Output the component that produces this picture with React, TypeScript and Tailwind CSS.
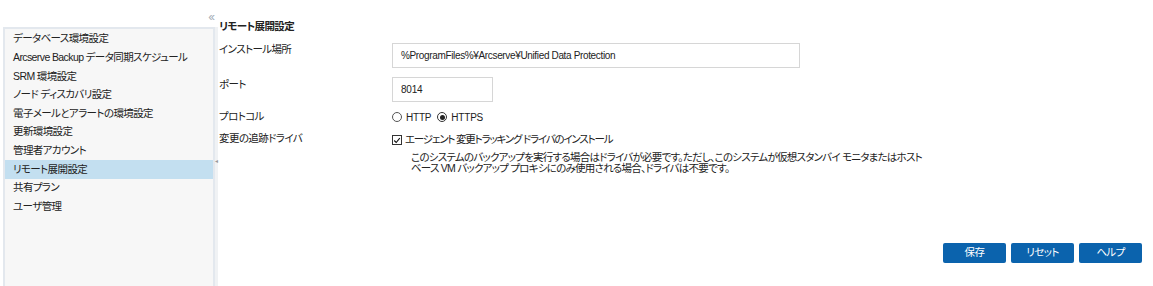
import React from 'react'

const font = { fontFamily: '"Liberation Sans", "Noto Sans CJK JP", sans-serif' }

const menu = [
  'データベース環境設定',
  'Arcserve Backup データ同期スケジュール',
  'SRM 環境設定',
  'ノード ディスカバリ設定',
  '電子メールとアラートの環境設定',
  '更新環境設定',
  '管理者アカウント',
  'リモート展開設定',
  '共有プラン',
  'ユーザ管理',
]

export default function App() {
  return (
    <div
      className="flex h-[286px] w-[1153px] overflow-hidden bg-white text-[10.5px] tracking-[-0.6px] text-[#222] [font-feature-settings:'palt']"
      style={font}
    >
      {/* left navigation */}
      <div className="flex w-[218px] shrink-0 flex-col pl-[3px]">
        <div className="flex h-[27px] items-center justify-end pr-[5px] pt-[6px]">
          <span className="text-[13px] leading-none tracking-[-2px] text-[#a7afb8]">‹‹</span>
        </div>
        <div className="flex flex-1">
          <div className="flex-1 border-l-2 border-t-2 border-r-2 border-[#e3e8ee] bg-[#f7f7f7] pt-[1px]">
            {menu.map((item) => (
              <div
                key={item}
                className={
                  'flex h-[18.6px] items-center whitespace-nowrap pl-[8px] ' +
                  (item === 'リモート展開設定' ? 'bg-[#c3dff0]' : '')
                }
              >
                {item}
              </div>
            ))}
          </div>
          <div className="flex w-[3px] flex-col items-center bg-[#f0f2f4] pt-[131px]">
            <span className="text-[6px] leading-none text-[#999]">◂</span>
          </div>
        </div>
      </div>

      {/* main content */}
      <div className="flex flex-1 flex-col pl-[1px]">
        <div className="mt-[19px] h-[14px] font-bold leading-[14px]">リモート展開設定</div>

        <div className="mt-[10px] flex">
          <div className="w-[173px] leading-[12px]">インストール場所</div>
          <div className="flex h-[25px] w-[408px] items-center border border-[#d6d6d6] px-[8px] text-[10px] tracking-[-0.35px]">
            %ProgramFiles%¥Arcserve¥Unified Data Protection
          </div>
        </div>

        <div className="mt-[9px] flex">
          <div className="w-[173px] pt-[1px] leading-[12px]">ポート</div>
          <div className="flex h-[25px] w-[101px] items-center border border-[#d6d6d6] px-[8px] text-[10px] tracking-[-0.2px]">
            8014
          </div>
        </div>

        <div className="mt-[8px] flex h-[14px] items-center">
          <div className="w-[173px]">プロトコル</div>
          <div className="flex items-center text-[10px] tracking-[-0.2px]">
            <span className="mr-[4px] inline-block h-[10px] w-[10px] rounded-full border border-[#555] bg-white" />
            <span className="mr-[6px]">HTTP</span>
            <span className="mr-[4px] flex h-[10px] w-[10px] items-center justify-center rounded-full border border-[#333] bg-white">
              <span className="h-[5px] w-[5px] rounded-full bg-[#222]" />
            </span>
            <span>HTTPS</span>
          </div>
        </div>

        <div className="mt-[7px] flex">
          <div className="w-[173px] leading-[14px]">変更の追跡ドライバ</div>
          <div className="flex flex-col pt-[2px]">
            <div className="flex h-[14px] items-center">
              <span className="mr-[3px] flex h-[10px] w-[10px] items-center justify-center border border-[#333] bg-white">
                <svg viewBox="0 0 10 10" className="h-[9px] w-[9px]">
                  <path d="M1.5 5 L4 7.5 L8.5 2" fill="none" stroke="#111" strokeWidth="1.4" />
                </svg>
              </span>
              <span className="tracking-[-1.2px]">エージェント 変更トラッキング ドライバのインストール</span>
            </div>
            <div className="mt-[5px] pl-[19px] leading-[11px] tracking-[-0.75px]">
              <div>このシステムのバックアップを実行する場合はドライバが必要です。ただし、このシステムが仮想スタンバイ モニタまたはホスト</div>
              <div>ベース VM バックアップ プロキシにのみ使用される場合、ドライバは不要です。</div>
            </div>
          </div>
        </div>

        <div className="mt-auto mb-[23px] flex justify-end gap-[5px] pr-[11px]">
          {['保存', 'リセット', 'ヘルプ'].map((b) => (
            <button
              key={b}
              className="h-[20px] w-[63px] rounded-[2px] bg-[#0b63ad] text-[10.5px] text-white"
            >
              {b}
            </button>
          ))}
        </div>
      </div>
    </div>
  )
}
